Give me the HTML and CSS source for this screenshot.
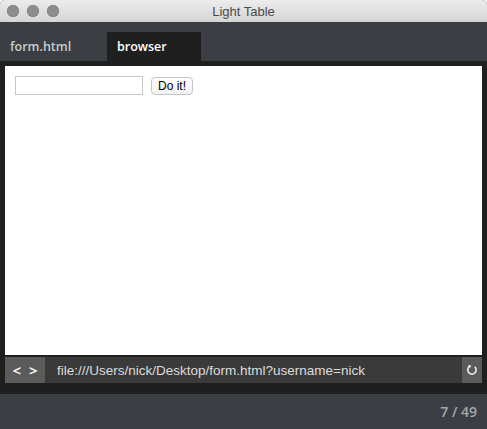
FILE: index.html
```html
<!DOCTYPE html>
<html>
<head>
<meta charset="utf-8">
<link rel="stylesheet" href="styles.css">
</head>
<body>
<div class="window">
  <div class="titlebar">
    <div class="lights">
      <span class="light"></span><span class="light"></span><span class="light"></span>
    </div>
    <div class="title">Light Table</div>
  </div>
  <div class="tabbar">
    <div class="tab">form.html</div>
    <div class="tab active">browser</div>
  </div>
  <div class="content">
    <div class="page">
      <input class="field" type="text">
      <button class="btn">Do it!</button>
    </div>
    <div class="urlbar">
      <div class="nav"><span>&lt;</span><span>&gt;</span></div>
      <div class="url">file:///Users/nick/Desktop/form.html?username=nick</div>
      <div class="reload">
        <svg width="12" height="12" viewBox="0 0 12 12"><path d="M8.8 2.8 A4.2 4.2 0 1 1 3.6 2.4" fill="none" stroke="#e8ecef" stroke-width="1.6"/><path d="M2.2 0.8 L5.6 1.8 L3.2 4.6 Z" fill="#e8ecef"/></svg>
      </div>
    </div>
  </div>
  <div class="status">7 / 49</div>
</div>
</body>
</html>
```
FILE: styles.css
```css
html, body {
  margin: 0;
  padding: 0;
  background: #ffffff;
}
.window {
  width: 487px;
  height: 429px;
  display: flex;
  flex-direction: column;
  border-radius: 5px 5px 0 0;
  overflow: hidden;
  background: #3b3f43;
  font-family: "Open Sans", "Liberation Sans", sans-serif;
}
.titlebar {
  height: 22px;
  flex: none;
  position: relative;
  background: linear-gradient(#ececec, #d5d5d5);
  display: flex;
  align-items: center;
  justify-content: center;
}
.lights {
  position: absolute;
  left: 7px;
  top: 5px;
  display: flex;
  gap: 8px;
}
.light {
  width: 12px;
  height: 12px;
  border-radius: 50%;
  background: #8d8d8f;
  box-shadow: inset 0 0 0 0.5px #7a7a7c;
}
.title {
  font-family: "Liberation Sans", Arial, sans-serif;
  font-size: 13px;
  color: #4a4a4a;
  margin-top: 1px;
}
.tabbar {
  height: 39px;
  flex: none;
  background: #3b3f43;
  display: flex;
  align-items: flex-end;
}
.tab {
  height: 29px;
  box-sizing: border-box;
  padding: 0 10px;
  width: 107px;
  font-size: 12.5px;
  font-weight: 600;
  color: #c7cacc;
  display: flex;
  align-items: center;
}
.tab.active {
  width: 94px;
  background: #1f1f1f;
  color: #ffffff;
}
.content {
  height: 333px;
  flex: none;
  background: #1f1f1f;
  box-sizing: border-box;
  padding: 5px 5px 11px 5px;
  display: flex;
  flex-direction: column;
  gap: 2px;
}
.page {
  height: 289px;
  background: #ffffff;
  box-sizing: border-box;
  padding: 10px 10px;
  display: flex;
  align-items: flex-start;
  gap: 8px;
}
.field {
  width: 128px;
  height: 19px;
  box-sizing: border-box;
  margin: 0;
  border: 1px solid #c8c8c8;
  padding: 0;
  background: #fff;
}
.btn {
  margin: 1px 0 0 0;
  width: 42px;
  height: 18px;
  box-sizing: border-box;
  border: 1px solid #c6c6c6;
  border-radius: 4px;
  background: linear-gradient(#ffffff, #f2f2f2);
  font-family: "Liberation Sans", Arial, sans-serif;
  font-size: 12px;
  color: #000;
  padding: 0;
  line-height: 16px;
}
.urlbar {
  height: 26px;
  flex: none;
  display: flex;
  background: #3a3a3a;
}
.nav {
  width: 40px;
  background: #5b5b5b;
  display: flex;
  align-items: center;
  justify-content: center;
  gap: 8px;
  color: #eef0f2;
  font-size: 15px;
  font-weight: 700;
  padding-bottom: 1px;
  box-sizing: border-box;
}
.url {
  flex: 1;
  padding-left: 12px;
  display: flex;
  align-items: center;
  font-family: "Liberation Sans", Arial, sans-serif;
  font-size: 13.5px;
  color: #dcdcdc;
}
.reload {
  width: 20px;
  background: #5b5b5b;
  display: flex;
  align-items: center;
  justify-content: center;
}
.status {
  flex: 1;
  display: flex;
  align-items: center;
  justify-content: flex-end;
  padding-right: 10px;
  font-size: 14px;
  font-weight: 600;
  color: #a3a8ad;
}
```
